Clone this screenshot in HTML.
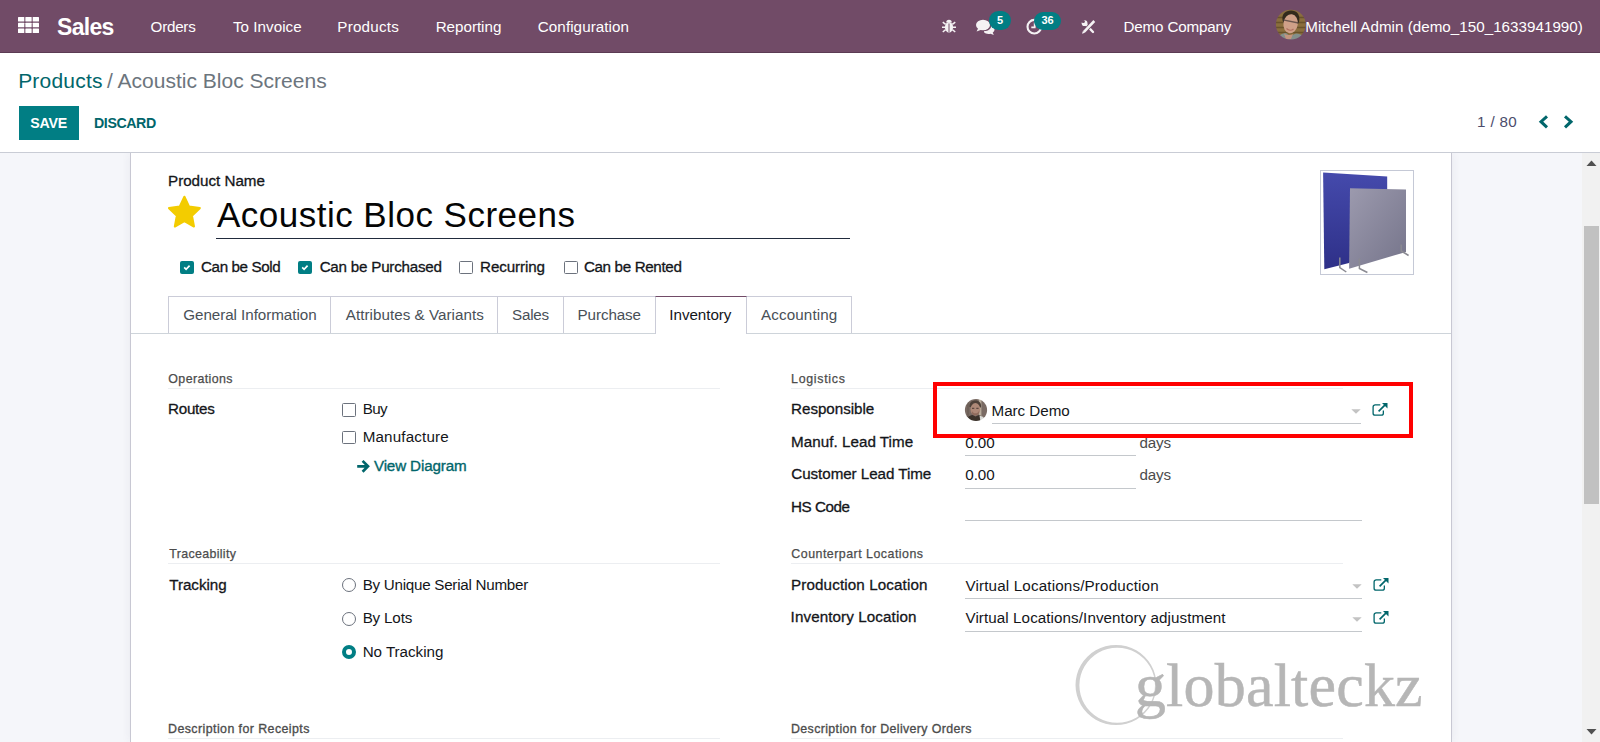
<!DOCTYPE html>
<html><head><meta charset="utf-8">
<style>
*{box-sizing:border-box;margin:0;padding:0}
html,body{width:1600px;height:742px;overflow:hidden;background:#fff;font-family:"Liberation Sans",sans-serif;color:#212529}
.abs{position:absolute;white-space:nowrap}
#nav{position:absolute;left:0;top:0;width:1600px;height:53px;background:#714B67;border-bottom:1px solid #5b3b53}
#cp{position:absolute;left:0;top:53px;width:1600px;height:100px;background:#fff;border-bottom:1px solid #c9ccd5}
#bg{position:absolute;left:0;top:153px;width:1600px;height:589px;background:#f5f6fa}
#sheet{position:absolute;left:130px;top:153px;width:1322px;height:589px;background:#fff;border-left:1px solid #c8c8d3;border-right:1px solid #c8c8d3;box-shadow:0 0 9px rgba(60,60,90,.07);clip-path:inset(0 -12px 0 -12px)}
.hr{position:absolute;height:1px;background:#eceef1}
.ul{position:absolute;height:1px;background:#c4c8cc}
.cb{position:absolute;width:14px;height:14px;border:1px solid #6c727d;background:#fff;border-radius:1.500px}
.cbc{position:absolute;width:14px;height:14px;background:#017e84;border-radius:2px}
.rd{position:absolute;width:14px;height:14px;border:1px solid #6c727d;background:#fff;border-radius:50%}
.tab{position:absolute;top:296px;height:38px;border:1px solid #cbccd8;border-bottom:none;background:#fff}
.badge{position:absolute;background:#017e84;color:#fff;font-weight:bold;font-size:11.5px;text-align:center;border-radius:10px;height:18px;line-height:18px}
</style></head><body>
<div id="nav">
 <svg class="abs" style="left:18px;top:17px" width="21" height="16" viewBox="0 0 21 16"><g fill="#fff"><rect x="0" y="0" width="6.300" height="4.600" rx=".5"/><rect x="7.35" y="0" width="6.300" height="4.600" rx=".5"/><rect x="14.7" y="0" width="6.300" height="4.600" rx=".5"/><rect x="0" y="5.7" width="6.300" height="4.600" rx=".5"/><rect x="7.35" y="5.7" width="6.300" height="4.600" rx=".5"/><rect x="14.7" y="5.7" width="6.300" height="4.600" rx=".5"/><rect x="0" y="11.4" width="6.300" height="4.600" rx=".5"/><rect x="7.35" y="11.4" width="6.300" height="4.600" rx=".5"/><rect x="14.7" y="11.4" width="6.300" height="4.600" rx=".5"/></g></svg>
 
 <svg class="abs" style="left:941px;top:18px;opacity:.93" width="16" height="16" viewBox="0 0 16 16"><g fill="#fff"><ellipse cx="8" cy="9.2" rx="4.1" ry="5.3"/><path d="M5.2 4.6a2.8 2.8 0 0 1 5.6 0z"/><path d="M1 8.4h3.4v1.5H1zM11.6 8.4H15v1.5h-3.4z"/><path d="M2.2 3.6l2.9 2.2-.9 1.1L1.3 4.7zM13.8 3.6l-2.9 2.2.9 1.1 2.9-2.2zM2.2 14.6l2.9-2.4-.9-1.1-2.9 2.4zM13.8 14.6l-2.9-2.4.9-1.1 2.9 2.4z"/></g><path d="M8 5.5v8.6" stroke="#714B67" stroke-width="1"/></svg>
 <svg class="abs" style="left:975px;top:18px;opacity:.93" width="21" height="18" viewBox="0 0 21 18"><g fill="#fff"><ellipse cx="8" cy="7" rx="7" ry="5.3"/><path d="M3.2 10.2L1.6 13.6l4.6-1.8z"/><path d="M9.5 13.3c4.2 0 7-2.4 7.2-5.6 1.9.8 3.1 2.300 3.100 4 0 1.300-.7 2.400-1.800 3.200l1.100 2.300-3.400-1.200c-.6.100-1.200.2-1.900.2-1.800 0-3.400-.6-4.500-1.600z" transform="translate(-.3 -.3)"/></g></svg>
 <div class="badge" style="left:989px;top:11px;width:22px;height:19px;line-height:19.5px;font-size:11px">5</div>
 <svg class="abs" style="left:1025px;top:17px;opacity:.93" width="19" height="19" viewBox="0 0 19 19"><circle cx="9.300" cy="9.700" r="6.800" fill="none" stroke="#fff" stroke-width="2.100"/><path d="M9.700 5.500v4.800H6.300" fill="none" stroke="#fff" stroke-width="1.800"/></svg>
 <div class="badge" style="left:1034px;top:12px;width:27px;height:17.500px;line-height:17.500px;font-size:11px">36</div>
 <svg class="abs" style="left:1080px;top:19px;opacity:.93" width="17" height="17" viewBox="0 0 17 17"><path d="M5.500 5.200L13 13" stroke="#fff" stroke-width="2.400" stroke-linecap="round" fill="none"/><circle cx="4.600" cy="4.200" r="2.900" fill="#fff"/><circle cx="3.300" cy="2.500" r="1.600" fill="#714B67"/><path d="M14.300 2L3.600 13.200" stroke="#714B67" stroke-width="4.200" fill="none"/><path d="M14.300 2L4 12.800" stroke="#fff" stroke-width="2.600" fill="none"/><path d="M2 14.800l1-3 2 2z" fill="#fff"/></svg>
 <svg class="abs" style="left:1275px;top:9px" width="32" height="32" viewBox="0 0 32 32"><defs><clipPath id="av1"><circle cx="15.800" cy="15.600" r="14.900"/></clipPath><filter id="bl1" x="-10%" y="-10%" width="120%" height="120%"><feGaussianBlur stdDeviation=".7"/></filter></defs><g clip-path="url(#av1)"><g filter="url(#bl1)"><rect x="-2" y="-2" width="36" height="36" fill="#8a6e3c"/><path d="M-2 8.500h36M-2 13.500h36M-2 18.500h36M-2 23.500h36" stroke="#69522b" stroke-width="1.300"/><path d="M7.500 11c-1-6 3-9.500 8.500-9.500s9.500 3.500 8 11.500l-1.500 2-14-1z" fill="#33291f"/><ellipse cx="15.600" cy="14.800" rx="7.200" ry="9.600" fill="#cfa088" transform="rotate(8 15.600 14.800)"/><path d="M8 10.800l15.500 3.200" stroke="#4a3d3a" stroke-width="1.300" opacity=".75"/><path d="M11.500 19.500c2 2 5 2.200 7 .5" stroke="#b0705f" stroke-width="1.200" fill="none"/><path d="M2 34c0-6 4-10 9-10l4 3 6-2.500c6 0 9 4 10 9.500z" fill="#83908b"/><path d="M9 24.500c2 1.500 6 2.500 9 .5l-2 5-5 .5z" fill="#c4957e"/></g></g></svg>

</div>
<div id="cp">
 <div class="abs" style="left:19px;top:53px;width:60px;height:34px;background:#017e84"></div>
 
 <svg class="abs" style="left:1536px;top:60px" width="14" height="18" viewBox="0 0 14 18"><path d="M11 3.600L5 9l6 5.600" fill="none" stroke="#01666b" stroke-width="3" transform="translate(0,-.3)"/></svg>
 <svg class="abs" style="left:1561px;top:60px" width="14" height="18" viewBox="0 0 14 18"><path d="M4 3.600L10 9l-6 5.600" fill="none" stroke="#01666b" stroke-width="3" transform="translate(0,-.3)"/></svg>

</div>
<div id="bg"></div>
<div id="sheet"></div>
<div id="content">
 <svg class="abs" style="left:167px;top:195px" width="35" height="34" viewBox="0 0 35 34"><path fill="#f3cc00" stroke="#f3cc00" stroke-width="2" stroke-linejoin="round" d="M17.400 2.500l4.400 9.200 10.100 1.300-7.400 7 1.900 10-9-4.900-9 4.900 1.900-10-7.400-7 10.100-1.300z" transform="translate(17.400 17.200) scale(1.060 1.080) translate(-17.400 -16.800)"/></svg>
 <div class="ul" style="left:216px;top:238px;width:634px;background:#212b3d"></div>

 <div class="cbc" style="left:180px;top:260.500px;height:13.500px"></div>
 <div class="cbc" style="left:298px;top:260.500px;height:13.500px"></div>
 <div class="cb" style="left:459px;top:260.500px;height:13.500px"></div>
 <div class="cb" style="left:564px;top:260.500px;height:13.500px"></div>

 <div class="hr" style="left:131px;top:333px;width:1320px;background:#ced4da"></div>
 <div class="tab" style="left:168px;width:163px"></div>
 <div class="tab" style="left:330px;width:168px"></div>
 <div class="tab" style="left:497px;width:67px"></div>
 <div class="tab" style="left:563px;width:93px"></div>
 <div class="tab" style="left:746px;width:106px"></div>
 <div class="hr" style="left:131px;top:333px;width:1320px;background:#ced4da"></div>
 <div class="tab" style="left:655px;width:92px;height:38px;border-top-color:#714B67"></div>

 <div class="abs" style="left:1320px;top:170px;width:94px;height:105px;border:1px solid #c5c9d6;background:#fff"></div>
 <svg class="abs" style="left:1320px;top:170px" width="94" height="105" viewBox="0 0 94 105"><defs><linearGradient id="gb" x1="0" y1="0" x2="0" y2="1"><stop offset="0" stop-color="#454aac"/><stop offset="1" stop-color="#2e3088"/></linearGradient><linearGradient id="gg" x1="0" y1="0" x2="1" y2="1"><stop offset="0" stop-color="#9c9aae"/><stop offset="1" stop-color="#75748a"/></linearGradient></defs><polygon points="3.100,2.600 67.200,6.500 67.200,60 29,93 4.300,99.200" fill="url(#gb)"/><polygon points="30,18.300 86,19.500 86,81.900 29.100,98.700" fill="url(#gg)"/><path d="M19.800 87.500v10l6.500 4.500M39.400 88.500v10l8 4M81.200 74.500v6.500l7.400 4.500" stroke="#8a8a92" stroke-width="1.500" fill="none"/></svg>

 <div class="hr" style="left:168px;top:388px;width:552px"></div>
 <div class="cb" style="left:342px;top:403px"></div>
 <div class="cb" style="left:342px;top:431px;height:13px"></div>

 <div class="hr" style="left:791px;top:388px;width:552px"></div>
 <div class="ul" style="left:992px;top:423px;width:369px"></div>
 <div class="ul" style="left:965px;top:455px;width:171px"></div>
 <div class="ul" style="left:965px;top:488px;width:171px"></div>
 <div class="ul" style="left:965px;top:520px;width:397px"></div>

 <div class="hr" style="left:168px;top:563px;width:552px"></div>
 <div class="rd" style="left:342px;top:578px"></div>
 <div class="rd" style="left:342px;top:612px"></div>
 <div class="rd" style="left:342px;top:645px;border:4.500px solid #017e84"></div>

 <div class="hr" style="left:791px;top:563px;width:552px"></div>
 <div class="ul" style="left:965px;top:598px;width:397px"></div>
 <div class="ul" style="left:965px;top:631px;width:397px"></div>

 <div class="hr" style="left:168px;top:738px;width:552px"></div>
 <div class="hr" style="left:791px;top:738px;width:552px"></div>

 <svg class="abs" style="left:1070px;top:640px" width="92" height="90" viewBox="0 0 92 90"><path fill="#d0d0d0" fill-rule="evenodd" d="M46 5a40.500 40 0 1 0 .01 0zM47.200 7.800a37.800 37.500 0 1 1 -.01 0z"/></svg>
 
 <svg class="abs" style="left:180px;top:260px" width="14" height="14" viewBox="0 0 14 14"><path d="M4.200 7.400l1.900 1.900 3.500-3.700" fill="none" stroke="#fff" stroke-width="1.700"/></svg>
 <svg class="abs" style="left:298px;top:260px" width="14" height="14" viewBox="0 0 14 14"><path d="M4.200 7.400l1.900 1.900 3.500-3.700" fill="none" stroke="#fff" stroke-width="1.700"/></svg>
 <svg class="abs" style="left:356px;top:459px" width="15" height="15" viewBox="0 0 15 15"><path d="M1.200 7.300h10M6.600 1.900l5.400 5.400-5.400 5.400" fill="none" stroke="#01666b" stroke-width="2.700"/></svg>
 <div class="abs" style="left:973.500px;top:407.500px;width:5px;height:5px"></div>
 <svg class="abs" style="left:964px;top:398px" width="24" height="24" viewBox="0 0 24 24"><defs><clipPath id="av2"><circle cx="12" cy="12" r="11.100"/></clipPath><filter id="bl2" x="-10%" y="-10%" width="120%" height="120%"><feGaussianBlur stdDeviation=".6"/></filter></defs><g clip-path="url(#av2)"><g filter="url(#bl2)"><rect x="-2" y="-2" width="28" height="28" fill="#796a63"/><rect x="14.800" y="-2" width="2.600" height="28" fill="#b9ad9c"/><rect x="3" y="-2" width="2" height="28" fill="#6e6059"/><path d="M5.500 9c-.5-4.500 2.500-6.500 6-6.500s6 2 5.500 7z" fill="#4d4038"/><ellipse cx="11.400" cy="11.300" rx="4.900" ry="6.200" fill="#ad8877"/><path d="M8 10.300h2.300M12.300 10.300h2.300" stroke="#4a3a34" stroke-width="1"/><path d="M7.800 12.500c1 3.500 6 4 7.400 0l-.5 3.500c-2 1.800-5 1.500-6.500 0z" fill="#8e6b5c"/><path d="M2 26c0-6 3-8.500 6.500-9l3 1.500 3.500-1.500c3 .5 3.500 3 4 9z" fill="#3a312c"/><path d="M15.500 17.500l4 1.500v5h-3z" fill="#d9dad6"/></g></g></svg>
<svg class="abs" style="left:1351px;top:409px" width="11" height="6" viewBox="0 0 11 6"><polygon points="0.300,0.300 9.700,0.300 5,4.700" fill="#c3c3c3"/></svg>
<svg class="abs" style="left:1370px;top:402px" width="18" height="16" viewBox="0 0 18 16"><path d="M10.300 2.900H5.100a2 2 0 0 0-2 2v6.250a2 2 0 0 0 2 2h6.250a2 2 0 0 0 2-2V8.600" fill="none" stroke="#01666b" stroke-width="1.300"/><path d="M8.600 9.400l6.500-6.500" stroke="#01666b" stroke-width="1.700"/><path d="M12 1h5.500v5.400z" fill="#01666b"/></svg>
<svg class="abs" style="left:1352px;top:584px" width="11" height="6" viewBox="0 0 11 6"><polygon points="0.300,0.300 9.700,0.300 5,4.700" fill="#c3c3c3"/></svg>
<svg class="abs" style="left:1371px;top:577px" width="18" height="16" viewBox="0 0 18 16"><path d="M10.300 2.900H5.100a2 2 0 0 0-2 2v6.250a2 2 0 0 0 2 2h6.250a2 2 0 0 0 2-2V8.600" fill="none" stroke="#01666b" stroke-width="1.300"/><path d="M8.600 9.400l6.500-6.500" stroke="#01666b" stroke-width="1.700"/><path d="M12 1h5.500v5.400z" fill="#01666b"/></svg>
<svg class="abs" style="left:1352px;top:617px" width="11" height="6" viewBox="0 0 11 6"><polygon points="0.300,0.300 9.700,0.300 5,4.700" fill="#c3c3c3"/></svg>
<svg class="abs" style="left:1371px;top:610px" width="18" height="16" viewBox="0 0 18 16"><path d="M10.300 2.900H5.100a2 2 0 0 0-2 2v6.250a2 2 0 0 0 2 2h6.250a2 2 0 0 0 2-2V8.600" fill="none" stroke="#01666b" stroke-width="1.300"/><path d="M8.600 9.400l6.500-6.500" stroke="#01666b" stroke-width="1.700"/><path d="M12 1h5.500v5.400z" fill="#01666b"/></svg>

</div>
<div class="abs" id="n_sales" style="left:57.05px;top:10.70px;font-size:23px;line-height:32px;font-weight:bold;color:#fff;letter-spacing:-0.686px;">Sales</div>
<div class="abs" id="n_orders" style="left:150.57px;top:16.00px;font-size:15.2px;line-height:21px;font-weight:normal;color:#fff;letter-spacing:-0.247px;">Orders</div>
<div class="abs" id="n_toinv" style="left:233.00px;top:16.00px;font-size:15.2px;line-height:21px;font-weight:normal;color:#fff;letter-spacing:0.027px;">To Invoice</div>
<div class="abs" id="n_prod" style="left:337.31px;top:16.00px;font-size:15.2px;line-height:21px;font-weight:normal;color:#fff;letter-spacing:0.224px;">Products</div>
<div class="abs" id="n_rep" style="left:435.68px;top:16.00px;font-size:15.2px;line-height:21px;font-weight:normal;color:#fff;letter-spacing:-0.023px;">Reporting</div>
<div class="abs" id="n_conf" style="left:537.84px;top:16.00px;font-size:15.2px;line-height:21px;font-weight:normal;color:#fff;letter-spacing:0.066px;">Configuration</div>
<div class="abs" id="n_comp" style="left:1123.52px;top:16.00px;font-size:15.2px;line-height:21px;font-weight:normal;color:#fff;letter-spacing:-0.162px;">Demo Company</div>
<div class="abs" id="n_user" style="left:1305.31px;top:16.00px;font-size:15.2px;line-height:21px;font-weight:normal;color:#fff;letter-spacing:0.017px;">Mitchell Admin (demo_150_1633941990)</div>
<div class="abs" id="bc1" style="left:18.15px;top:66.00px;font-size:21px;line-height:29px;font-weight:normal;color:#01666b;letter-spacing:0.205px;">Products</div>
<div class="abs" id="bc2" style="left:107.00px;top:66.00px;font-size:21px;line-height:29px;font-weight:normal;color:#6c757d;letter-spacing:0.010px;">/ Acoustic Bloc Screens</div>
<div class="abs" id="save" style="left:30.30px;top:113.00px;font-size:14.2px;line-height:20px;font-weight:bold;color:#fff;letter-spacing:-0.249px;">SAVE</div>
<div class="abs" id="discard" style="left:94.05px;top:113.00px;font-size:14.2px;line-height:20px;font-weight:bold;color:#01666b;letter-spacing:-0.422px;">DISCARD</div>
<div class="abs" id="pager" style="left:1477.10px;top:111.00px;font-size:15.2px;line-height:21px;font-weight:normal;color:#4c4c6c;letter-spacing:0.329px;">1 / 80</div>
<div class="abs" id="pname" style="left:168.05px;top:169.75px;font-size:15.2px;line-height:21px;font-weight:normal;color:#14161a;letter-spacing:-0.022px;-webkit-text-stroke:0.3px #14161a;">Product Name</div>
<div class="abs" id="title" style="left:217.00px;top:190.30px;font-size:35px;line-height:49px;font-weight:normal;color:#050505;letter-spacing:0.486px;">Acoustic Bloc Screens</div>
<div class="abs" id="c1" style="left:201.04px;top:256.00px;font-size:15.2px;line-height:21px;font-weight:normal;color:#14161a;letter-spacing:-0.400px;-webkit-text-stroke:0.3px #14161a;">Can be Sold</div>
<div class="abs" id="c2" style="left:319.64px;top:256.00px;font-size:15.2px;line-height:21px;font-weight:normal;color:#14161a;letter-spacing:-0.226px;-webkit-text-stroke:0.3px #14161a;">Can be Purchased</div>
<div class="abs" id="c3" style="left:480.04px;top:256.00px;font-size:15.2px;line-height:21px;font-weight:normal;color:#14161a;letter-spacing:-0.104px;-webkit-text-stroke:0.3px #14161a;">Recurring</div>
<div class="abs" id="c4" style="left:583.92px;top:256.00px;font-size:15.2px;line-height:21px;font-weight:normal;color:#14161a;letter-spacing:-0.352px;-webkit-text-stroke:0.3px #14161a;">Can be Rented</div>
<div class="abs" id="t1" style="left:183.26px;top:303.90px;font-size:15.2px;line-height:21px;font-weight:normal;color:#495057;letter-spacing:-0.050px;">General Information</div>
<div class="abs" id="t2" style="left:345.79px;top:303.90px;font-size:15.2px;line-height:21px;font-weight:normal;color:#495057;letter-spacing:0.033px;">Attributes &amp; Variants</div>
<div class="abs" id="t3" style="left:512.08px;top:303.90px;font-size:15.2px;line-height:21px;font-weight:normal;color:#495057;letter-spacing:-0.262px;">Sales</div>
<div class="abs" id="t4" style="left:577.60px;top:303.90px;font-size:15.2px;line-height:21px;font-weight:normal;color:#495057;letter-spacing:-0.103px;">Purchase</div>
<div class="abs" id="t5" style="left:669.34px;top:303.90px;font-size:15.2px;line-height:21px;font-weight:normal;color:#14161a;letter-spacing:-0.042px;">Inventory</div>
<div class="abs" id="t6" style="left:761.04px;top:303.90px;font-size:15.2px;line-height:21px;font-weight:normal;color:#495057;letter-spacing:0.116px;">Accounting</div>
<div class="abs" id="s_op" style="left:168.34px;top:370.80px;font-size:12.4px;line-height:17px;font-weight:normal;color:#4c4c4c;letter-spacing:0.386px;-webkit-text-stroke:0.25px #4c4c4c;">Operations</div>
<div class="abs" id="l_routes" style="left:168.05px;top:398.25px;font-size:15.2px;line-height:21px;font-weight:normal;color:#14161a;letter-spacing:-0.266px;-webkit-text-stroke:0.3px #14161a;">Routes</div>
<div class="abs" id="v_buy" style="left:362.63px;top:398.25px;font-size:15.2px;line-height:21px;font-weight:normal;color:#14161a;letter-spacing:-0.549px;">Buy</div>
<div class="abs" id="v_manu" style="left:362.63px;top:426.00px;font-size:15.2px;line-height:21px;font-weight:normal;color:#14161a;letter-spacing:0.160px;">Manufacture</div>
<div class="abs" id="v_view" style="left:373.91px;top:455.25px;font-size:15.2px;line-height:21px;font-weight:normal;color:#01666b;letter-spacing:-0.136px;-webkit-text-stroke:0.35px #01666b;">View Diagram</div>
<div class="abs" id="s_log" style="left:791.05px;top:370.80px;font-size:12.4px;line-height:17px;font-weight:normal;color:#4c4c4c;letter-spacing:0.703px;-webkit-text-stroke:0.25px #4c4c4c;">Logistics</div>
<div class="abs" id="l_resp" style="left:791.05px;top:398.25px;font-size:15.2px;line-height:21px;font-weight:normal;color:#14161a;letter-spacing:-0.032px;-webkit-text-stroke:0.3px #14161a;">Responsible</div>
<div class="abs" id="v_marc" style="left:991.59px;top:400.25px;font-size:15.2px;line-height:21px;font-weight:normal;color:#14161a;letter-spacing:-0.042px;">Marc Demo</div>
<div class="abs" id="l_manuf" style="left:791.05px;top:431.25px;font-size:15.2px;line-height:21px;font-weight:normal;color:#14161a;letter-spacing:0.034px;-webkit-text-stroke:0.3px #14161a;">Manuf. Lead Time</div>
<div class="abs" id="v_000a" style="left:965.25px;top:432.25px;font-size:15.2px;line-height:21px;font-weight:normal;color:#14161a;letter-spacing:-0.024px;">0.00</div>
<div class="abs" id="v_daysa" style="left:1139.61px;top:432.25px;font-size:15.2px;line-height:21px;font-weight:normal;color:#4c4c4c;letter-spacing:-0.212px;">days</div>
<div class="abs" id="l_cust" style="left:791.24px;top:463.00px;font-size:15.2px;line-height:21px;font-weight:normal;color:#14161a;letter-spacing:-0.055px;-webkit-text-stroke:0.3px #14161a;">Customer Lead Time</div>
<div class="abs" id="v_000b" style="left:965.25px;top:464.25px;font-size:15.2px;line-height:21px;font-weight:normal;color:#14161a;letter-spacing:-0.024px;">0.00</div>
<div class="abs" id="v_daysb" style="left:1139.61px;top:464.25px;font-size:15.2px;line-height:21px;font-weight:normal;color:#4c4c4c;letter-spacing:-0.212px;">days</div>
<div class="abs" id="l_hs" style="left:791.05px;top:496.00px;font-size:15.2px;line-height:21px;font-weight:normal;color:#14161a;letter-spacing:-0.470px;-webkit-text-stroke:0.3px #14161a;">HS Code</div>
<div class="abs" id="s_tr" style="left:169.31px;top:545.80px;font-size:12.4px;line-height:17px;font-weight:normal;color:#4c4c4c;letter-spacing:0.342px;-webkit-text-stroke:0.25px #4c4c4c;">Traceability</div>
<div class="abs" id="l_track" style="left:169.27px;top:574.00px;font-size:15.2px;line-height:21px;font-weight:normal;color:#14161a;letter-spacing:-0.050px;-webkit-text-stroke:0.3px #14161a;">Tracking</div>
<div class="abs" id="v_r1" style="left:362.63px;top:574.00px;font-size:15.2px;line-height:21px;font-weight:normal;color:#14161a;letter-spacing:-0.261px;">By Unique Serial Number</div>
<div class="abs" id="v_r2" style="left:362.63px;top:606.75px;font-size:15.2px;line-height:21px;font-weight:normal;color:#14161a;letter-spacing:-0.167px;">By Lots</div>
<div class="abs" id="v_r3" style="left:362.63px;top:640.75px;font-size:15.2px;line-height:21px;font-weight:normal;color:#14161a;letter-spacing:-0.033px;">No Tracking</div>
<div class="abs" id="s_cp" style="left:791.32px;top:545.80px;font-size:12.4px;line-height:17px;font-weight:normal;color:#4c4c4c;letter-spacing:0.492px;-webkit-text-stroke:0.25px #4c4c4c;">Counterpart Locations</div>
<div class="abs" id="l_pl" style="left:791.05px;top:574.00px;font-size:15.2px;line-height:21px;font-weight:normal;color:#14161a;letter-spacing:0.119px;-webkit-text-stroke:0.3px #14161a;">Production Location</div>
<div class="abs" id="v_pl" style="left:965.47px;top:575.25px;font-size:15.2px;line-height:21px;font-weight:normal;color:#14161a;letter-spacing:0.159px;">Virtual Locations/Production</div>
<div class="abs" id="l_il" style="left:790.60px;top:606.00px;font-size:15.2px;line-height:21px;font-weight:normal;color:#14161a;letter-spacing:0.099px;-webkit-text-stroke:0.3px #14161a;">Inventory Location</div>
<div class="abs" id="v_il" style="left:965.47px;top:607.25px;font-size:15.2px;line-height:21px;font-weight:normal;color:#14161a;letter-spacing:0.077px;">Virtual Locations/Inventory adjustment</div>
<div class="abs" id="s_dr" style="left:168.05px;top:720.80px;font-size:12.4px;line-height:17px;font-weight:normal;color:#4c4c4c;letter-spacing:0.428px;-webkit-text-stroke:0.32px #4c4c4c;">Description for Receipts</div>
<div class="abs" id="s_dd" style="left:791.05px;top:720.80px;font-size:12.4px;line-height:17px;font-weight:normal;color:#4c4c4c;letter-spacing:0.365px;-webkit-text-stroke:0.32px #4c4c4c;">Description for Delivery Orders</div>
<div class="abs" id="wm" style="left:1134.90px;top:641.75px;font-size:62px;line-height:87px;font-weight:normal;color:#b6b6b6;letter-spacing:0.199px;font-family:'Liberation Serif',serif;-webkit-text-stroke:0.5px #b6b6b6;">globalteckz</div>
<div class="abs" style="left:933px;top:382px;width:480px;height:56px;border:4px solid #ff0000"></div>
<div class="abs" style="left:1582px;top:153px;width:18px;height:589px;background:#f1f1f1"></div>
<div class="abs" style="left:1584px;top:226px;width:15px;height:278px;background:#c1c1c1"></div>
<svg class="abs" style="left:1583px;top:153px" width="17" height="17"><polygon points="3.5,13 13.5,13 8.5,7.5" fill="#505050"/></svg>
<svg class="abs" style="left:1583px;top:725px" width="17" height="17"><polygon points="3.5,4 13.5,4 8.5,9.5" fill="#505050"/></svg>
</body></html>
